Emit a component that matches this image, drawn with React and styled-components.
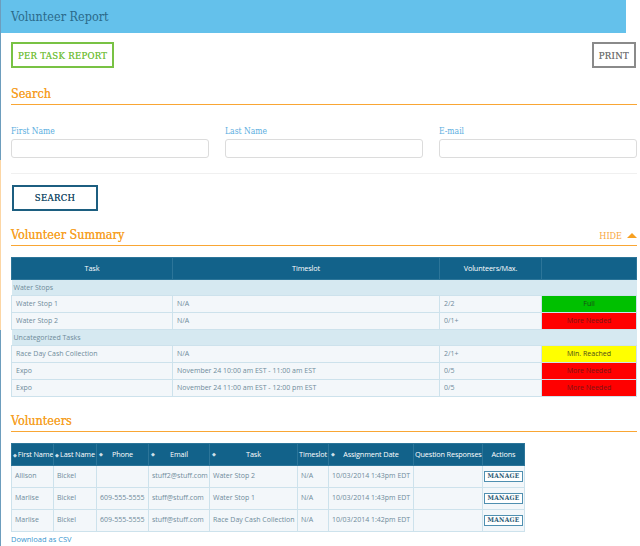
import React from "react";
import styled, { createGlobalStyle } from "styled-components";

const Global = createGlobalStyle`
  html, body { margin: 0; padding: 0; background: #fff; }
  body { font-family: "Open Sans", "DejaVu Sans", sans-serif; }
  * { box-sizing: border-box; }
`;

const Page = styled.div`
  width: 640px;
  min-height: 546px;
  border-left: 1px solid transparent;
  border-image: linear-gradient(to bottom, #6d9dbd 0, #6d9dbd 160px, #fcd6a4 160px, #fcd6a4 330px, #6d9dbd 330px, #6d9dbd 100%) 1;
`;

const Header = styled.div`
  width: 625px;
  height: 33px;
  background: #64c1eb;
  display: flex;
  align-items: center;
  padding-left: 10px;
  font-family: "DejaVu Serif Condensed", "DejaVu Serif", serif;
  font-size: 12.5px;
  color: #2b6a8a;
`;

const Content = styled.div`
  padding: 9px 4px 0 10px;
`;

const TopBar = styled.div`
  display: flex;
  justify-content: space-between;
  align-items: flex-start;
`;

const OutlineButton = styled.button`
  height: 26px;
  padding: 0 ${(p) => p.$pad || 6}px;
  background: #fff;
  border: 2px solid ${(p) => p.$color};
  color: ${(p) => p.$text || p.$color};
  font-family: "DejaVu Serif Condensed", "DejaVu Serif", serif;
  font-size: 9.5px;
  letter-spacing: 0.3px;
  text-transform: uppercase;
  cursor: pointer;
  min-width: ${(p) => p.$w || 0}px;
  text-shadow: 0 0 0.4px currentColor;
`;

const SectionHead = styled.div`
  margin-top: ${(p) => p.$top}px;
  display: flex;
  justify-content: space-between;
  align-items: flex-end;
  border-bottom: 1.5px solid #f9a634;
  padding-bottom: 3px;
  width: 626px;
`;

const SectionTitle = styled.div`
  font-family: "DejaVu Serif Condensed", "DejaVu Serif", serif;
  font-size: 12.5px;
  color: #f6a029;
  line-height: 14px;
  text-shadow: 0 0 0.5px currentColor;
`;

const HideLink = styled.div`
  display: flex;
  align-items: center;
  gap: 5px;
  font-family: "DejaVu Serif Condensed", "DejaVu Serif", serif;
  font-size: 9px;
  color: #f8a640;
  padding-bottom: 1px;
`;

const Triangle = styled.span`
  width: 0;
  height: 0;
  border-left: 5px solid transparent;
  border-right: 5px solid transparent;
  border-bottom: 5px solid #f7a021;
`;

const FieldRow = styled.div`
  display: grid;
  grid-template-columns: 198px 198px 198px;
  column-gap: 16px;
  margin-top: 21px;
  padding-bottom: 15px;
  border-bottom: 1px solid #f0f0f0;
  width: 626px;
`;

const Field = styled.div`
  display: flex;
  flex-direction: column;
  gap: 3px;
`;

const Label = styled.label`
  font-family: "DejaVu Serif Condensed", "DejaVu Serif", serif;
  font-size: 8.5px;
  color: #5aaee0;
`;

const Input = styled.input`
  height: 19px;
  border: 1px solid #dcdcdc;
  border-radius: 3px;
  background: #fff;
`;

const SearchWrap = styled.div`
  margin-top: 10px;
  padding-left: 1px;
`;

const Table = styled.table`
  border-collapse: collapse;
  width: ${(p) => p.$w}px;
  table-layout: fixed;
  font-family: "Open Sans", sans-serif;
  font-size: 7px;
  color: #6f8b9a;
  margin-top: ${(p) => p.$top}px;
`;

const Th = styled.th`
  background: #12628a;
  color: #fff;
  font-weight: 400;
  font-size: 7.3px;
  height: ${(p) => p.$h}px;
  border: 1px solid #2c7599;
  text-align: center;
  white-space: nowrap;
  padding: 0 1px;
  letter-spacing: -0.15px;
  position: relative;
  overflow: hidden;
`;

const SortIcon = styled.span`
  position: absolute;
  left: 2px;
  top: 50%;
  transform: translateY(-50%);
  font-size: 5px;
  color: #cfe0ea;
`;

const InlineSort = styled.span`
  font-size: 5px;
  color: #cfe0ea;
  margin-right: 1px;
`;

const GroupCell = styled.td`
  background: #d6e9f1;
  height: 16px;
  padding: 0 2px;
  border-top: 1px solid #c9e0ea;
  color: #6f8b9a;
`;

const Td = styled.td`
  background: #f3f7fa;
  border: 1px solid #cde2ec;
  height: ${(p) => p.$h}px;
  padding: 0 ${(p) => (p.$pad === undefined ? 4 : p.$pad)}px;
  white-space: nowrap;
  overflow: hidden;
  text-align: ${(p) => p.$align || "left"};
  vertical-align: ${(p) => p.$valign || "middle"};
  padding-top: ${(p) => p.$pt || 0}px;
`;

const StatusCell = styled.td`
  background: ${(p) => p.$bg};
  color: ${(p) => p.$fg};
  text-align: center;
  border: 1px solid #cde2ec;
  height: 17px;
  white-space: nowrap;
`;

const ManageButton = styled.span`
  display: inline-block;
  border: 1px solid #4f8fb0;
  padding: 0 2px;
  font-family: "DejaVu Serif Condensed", "DejaVu Serif", serif;
  font-size: 6.5px;
  font-weight: 600;
  color: #2b5a75;
  letter-spacing: 0.3px;
  background: #fff;
  line-height: 9px;
  margin-top: 3px;
`;

const CsvLink = styled.a`
  display: block;
  font-family: "Open Sans", sans-serif;
  font-size: 7.5px;
  color: #3a97d0;
  margin-top: 2px;
  text-decoration: none;
`;

const statusStyles = {
  Full: { bg: "#00c000", fg: "#1a4a1a" },
  "More Needed": { bg: "#ff0000", fg: "#7a1515" },
  "Min. Reached": { bg: "#ffff00", fg: "#4a4a1a" },
};

const summary = [
  { group: "Water Stops" },
  { task: "Water Stop 1", slot: "N/A", count: "2/2", status: "Full" },
  { task: "Water Stop 2", slot: "N/A", count: "0/1+", status: "More Needed" },
  { group: "Uncategorized Tasks" },
  { task: "Race Day Cash Collection", slot: "N/A", count: "2/1+", status: "Min. Reached" },
  { task: "Expo", slot: "November 24 10:00 am EST - 11:00 am EST", count: "0/5", status: "More Needed" },
  { task: "Expo", slot: "November 24 11:00 am EST - 12:00 pm EST", count: "0/5", status: "More Needed" },
];

const volunteers = [
  ["Allison", "Bickel", "", "stuff2@stuff.com", "Water Stop 2", "N/A", "10/03/2014 1:43pm EDT"],
  ["Marlise", "Bickel", "609-555-5555", "stuff@stuff.com", "Water Stop 1", "N/A", "10/03/2014 1:43pm EDT"],
  ["Marlise", "Bickel", "609-555-5555", "stuff@stuff.com", "Race Day Cash Collection", "N/A", "10/03/2014 1:42pm EDT"],
];

const volCols = [
  { label: "First Name", w: 42, sort: true, tight: true },
  { label: "Last Name", w: 43, sort: true, tight: true },
  { label: "Phone", w: 52, sort: true },
  { label: "Email", w: 61, sort: true },
  { label: "Task", w: 88, sort: true },
  { label: "Timeslot", w: 31 },
  { label: "Assignment Date", w: 85, sort: true },
  { label: "Question Responses", w: 69 },
  { label: "Actions", w: 42 },
];

export default function App() {
  return (
    <Page>
      <Global />
      <Header>Volunteer Report</Header>
      <Content>
        <TopBar>
          <OutlineButton $color="#78c244" $pad={5}>Per Task Report</OutlineButton>
          <OutlineButton $color="#8a8a8a" $text="#777" $pad={5}>Print</OutlineButton>
        </TopBar>

        <SectionHead $top={19}>
          <SectionTitle>Search</SectionTitle>
        </SectionHead>

        <FieldRow>
          <Field>
            <Label>First Name</Label>
            <Input />
          </Field>
          <Field>
            <Label>Last Name</Label>
            <Input />
          </Field>
          <Field>
            <Label>E-mail</Label>
            <Input />
          </Field>
        </FieldRow>

        <SearchWrap>
          <OutlineButton $color="#1c5e80" $text="#1f4f6a" $w={86}>Search</OutlineButton>
        </SearchWrap>

        <SectionHead $top={17}>
          <SectionTitle>Volunteer Summary</SectionTitle>
          <HideLink>
            HIDE <Triangle />
          </HideLink>
        </SectionHead>

        <Table $w={625} $top={11}>
          <colgroup>
            <col style={{ width: 161 }} />
            <col style={{ width: 267 }} />
            <col style={{ width: 102 }} />
            <col style={{ width: 95 }} />
          </colgroup>
          <thead>
            <tr>
              <Th $h={22}>Task</Th>
              <Th $h={22}>Timeslot</Th>
              <Th $h={22}>Volunteers/Max.</Th>
              <Th $h={22}></Th>
            </tr>
          </thead>
          <tbody>
            {summary.map((r, i) =>
              r.group ? (
                <tr key={i}>
                  <GroupCell colSpan={4}>{r.group}</GroupCell>
                </tr>
              ) : (
                <tr key={i}>
                  <Td $h={17}>{r.task}</Td>
                  <Td $h={17}>{r.slot}</Td>
                  <Td $h={17}>{r.count}</Td>
                  <StatusCell $bg={statusStyles[r.status].bg} $fg={statusStyles[r.status].fg}>
                    {r.status}
                  </StatusCell>
                </tr>
              )
            )}
          </tbody>
        </Table>

        <SectionHead $top={17}>
          <SectionTitle>Volunteers</SectionTitle>
        </SectionHead>

        <Table $w={513} $top={11}>
          <colgroup>
            {volCols.map((c) => (
              <col key={c.label} style={{ width: c.w }} />
            ))}
          </colgroup>
          <thead>
            <tr>
              {volCols.map((c) => (
                <Th key={c.label} $h={22}>
                  {c.sort && !c.tight && <SortIcon>◆</SortIcon>}
                  {c.sort && c.tight && <InlineSort>◆</InlineSort>}
                  {c.label}
                </Th>
              ))}
            </tr>
          </thead>
          <tbody>
            {volunteers.map((r, i) => (
              <tr key={i}>
                {r.map((v, j) => (
                  <Td key={j} $h={22} $pad={3} $valign="top" $pt={5}>
                    {v}
                  </Td>
                ))}
                <Td $h={22} $pad={3}></Td>
                <Td $h={22} $pad={0} $align="center" $valign="top" $pt={2}>
                  <ManageButton>MANAGE</ManageButton>
                </Td>
              </tr>
            ))}
          </tbody>
        </Table>
        <CsvLink href="#">Download as CSV</CsvLink>
      </Content>
    </Page>
  );
}
